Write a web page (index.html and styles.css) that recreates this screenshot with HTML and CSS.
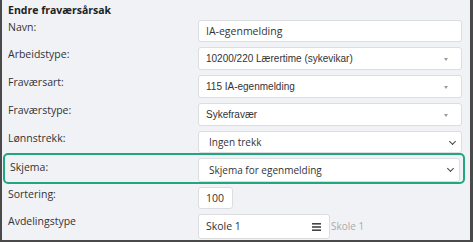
FILE: index.html
```html
<!DOCTYPE html>
<html lang="no">
<head>
    <meta charset="UTF-8">
    <meta name="viewport" content="width=device-width, initial-scale=1.0">
    <title>Endre fraværsårsak</title>
    <link rel="stylesheet" href="styles.css">
</head>
<body>
    <div class="frame">
        <h1 class="title">Endre fraværsårsak</h1>

        <div class="row">
            <label class="label">Navn:</label>
            <div class="field text-field">IA-egenmelding</div>
        </div>

        <div class="row">
            <label class="label">Arbeidstype:</label>
            <div class="field select2">10200/220 Lærertime (sykevikar)<span class="arrow"></span></div>
        </div>

        <div class="row">
            <label class="label">Fraværsart:</label>
            <div class="field select2">115 IA-egenmelding<span class="arrow"></span></div>
        </div>

        <div class="row">
            <label class="label">Fraværstype:</label>
            <div class="field select2">Sykefravær<span class="arrow"></span></div>
        </div>

        <div class="row row-flush">
            <label class="label">Lønnstrekk:</label>
            <div class="field native">Ingen trekk<span class="chevron"></span></div>
        </div>

        <div class="row highlight">
            <label class="label">Skjema:</label>
            <div class="field native">Skjema for egenmelding<span class="chevron"></span></div>
        </div>

        <div class="row">
            <label class="label">Sortering:</label>
            <div class="field text-field small">100</div>
        </div>

        <div class="row">
            <label class="label">Avdelingstype</label>
            <div class="field text-field medium">Skole 1
                <svg class="menu-icon" width="9" height="8" viewBox="0 0 9 8">
                    <rect x="0" y="0" width="9" height="1.6" fill="#444"/>
                    <rect x="0" y="3.2" width="9" height="1.6" fill="#444"/>
                    <rect x="0" y="6.4" width="9" height="1.6" fill="#444"/>
                </svg>
            </div>
            <span class="hint">Skole 1</span>
        </div>
    </div>
</body>
</html>
```

FILE: styles.css
```css
* {
    margin: 0;
    padding: 0;
    box-sizing: border-box;
}

body {
    width: 473px;
    height: 242px;
    overflow: hidden;
    font-family: "Open Sans", sans-serif;
    font-size: 10px;
    color: #333;
    background-color: #f1f2f6;
}

.frame {
    height: 242px;
    border-left: 2px solid #4a4a4a;
    border-right: 3px solid #4a4a4a;
    border-bottom: 2px solid #4a4a4a;
    padding: 0 0 0 6px;
    overflow: hidden;
}

.title {
    font-size: 10.5px;
    font-weight: bold;
    color: #222;
    line-height: 14px;
    padding-top: 3px;
    height: 20px;
}

.row {
    display: flex;
    align-items: flex-start;
    margin-bottom: 5px;
}

.row-flush {
    margin-bottom: 0;
}

.label {
    width: 190px;
    flex: none;
    font-size: 10.5px;
    line-height: 14px;
}

.field {
    position: relative;
    width: 264px;
    height: 23px;
    background-color: #fff;
    border: 1px solid #dcdde1;
    border-radius: 3px;
    line-height: 21px;
    padding-left: 7px;
    white-space: nowrap;
}

.text-field {
    height: 22px;
    line-height: 20px;
    font-size: 10.5px;
}

.select2 {
    font-family: "Liberation Sans", Arial, sans-serif;
    font-size: 10px;
}

.native {
    height: 22px;
    line-height: 20px;
    padding-left: 10px;
}

.arrow {
    position: absolute;
    right: 13px;
    top: 10px;
    border-left: 2.5px solid transparent;
    border-right: 2.5px solid transparent;
    border-top: 3px solid #999;
}

.chevron {
    position: absolute;
    right: 6px;
    top: 7px;
    width: 5px;
    height: 5px;
    border-right: 1.5px solid #444;
    border-bottom: 1.5px solid #444;
    transform: rotate(45deg);
}

.highlight {
    margin-left: -5px;
    margin-right: 5px;
    padding: 3px 3px 0 5px;
    border: 2px solid #22a67f;
    border-radius: 5px;
    height: 31px;
    margin-bottom: 3px;
}

.highlight .label {
    width: 188px;
    margin-top: 2px;
}

.highlight .field {
    height: 24px;
    line-height: 22px;
}

.small {
    width: 35px;
}

.medium {
    width: 132px;
    height: 25px;
    line-height: 23px;
}

.menu-icon {
    position: absolute;
    right: 8px;
    top: 8px;
}

.hint {
    color: #aaa;
    line-height: 25px;
    padding-left: 1px;
}
```
